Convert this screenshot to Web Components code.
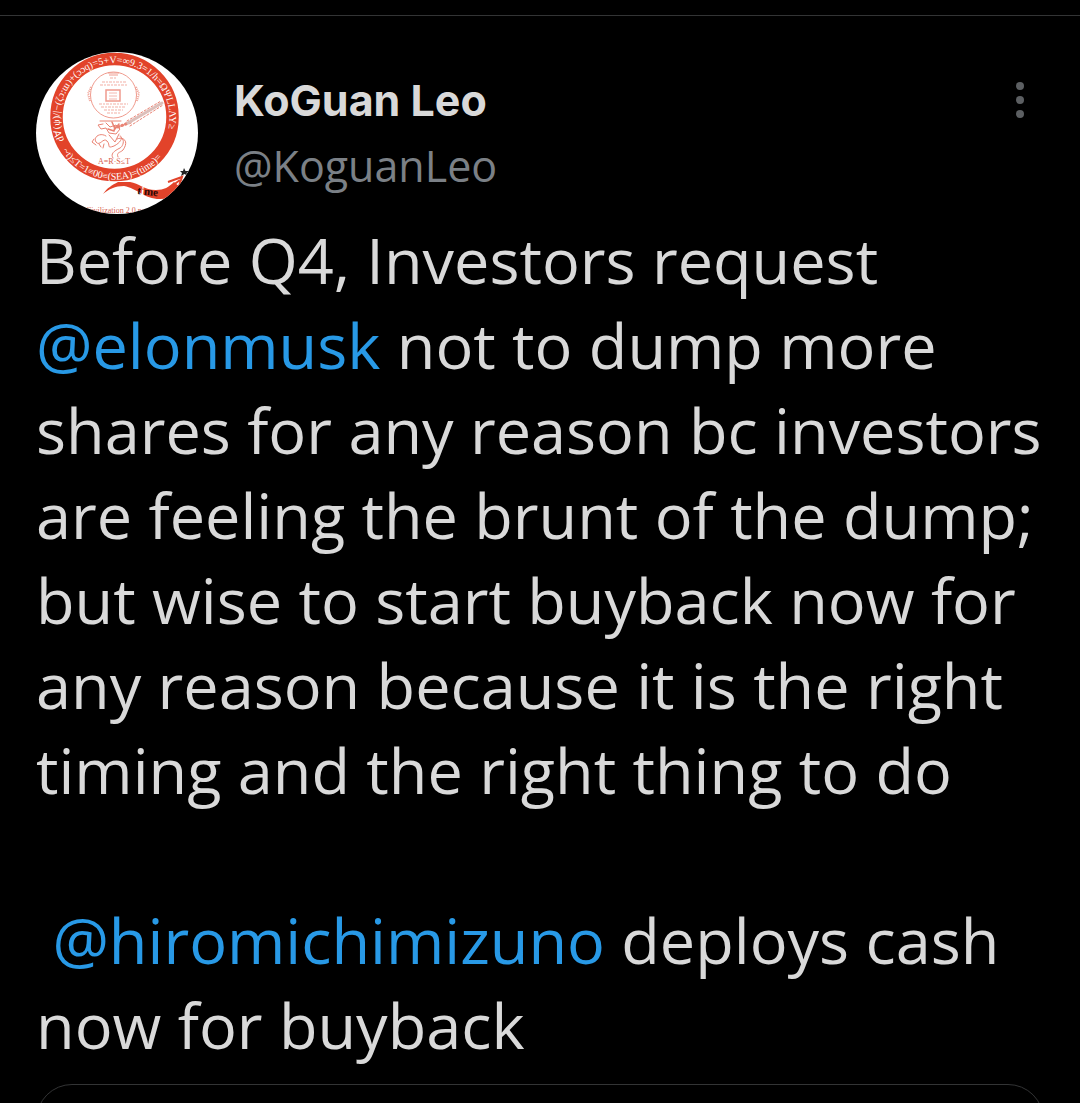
<!DOCTYPE html>
<html lang="en">
<head>
<meta charset="utf-8">
<meta name="viewport" content="width=device-width, initial-scale=1">
<title>KoGuan Leo</title>
<style>
    body {
        margin: 0;
        background: #000;
        color: #d9d9d9;
        font-family: "Open Sans", "Noto Sans", sans-serif;
    }
</style>
</head>
<body>
<tweet-post>
    <user-avatar slot="avatar"></user-avatar>
    <user-name slot="author" handle="KoguanLeo">KoGuan Leo</user-name>
    <more-button slot="menu"></more-button>
    <tweet-text>Before Q4, Investors request
<user-mention handle="elonmusk"></user-mention> not to dump more
shares for any reason bc investors
are feeling the brunt of the dump;
but wise to start buyback now for
any reason because it is the right
timing and the right thing to do

 <user-mention handle="hiromichimizuno"></user-mention> deploys cash
now for buyback</tweet-text>
    <quote-card slot="quote"></quote-card>
</tweet-post>

<script>
class TweetPost extends HTMLElement {
    constructor() {
        super();
        this.attachShadow({ mode: 'open' });
        this.shadowRoot.innerHTML = `
            <style>
                :host {
                    display: block;
                    padding-top: 15px;
                }
                article {
                    border-top: 1px solid #333435;
                    padding: 36px 36px 0;
                }
                header {
                    display: flex;
                    align-items: flex-start;
                    gap: 36px;
                }
                .author {
                    flex: 1;
                    min-width: 0;
                    padding-top: 16px;
                }
                .menu {
                    padding-top: 24px;
                }
            </style>
            <article>
                <header>
                    <slot name="avatar"></slot>
                    <div class="author"><slot name="author"></slot></div>
                    <div class="menu"><slot name="menu"></slot></div>
                </header>
                <slot></slot>
                <slot name="quote"></slot>
            </article>
        `;
    }
}

class UserAvatar extends HTMLElement {
    constructor() {
        super();
        this.attachShadow({ mode: 'open' });
        this.shadowRoot.innerHTML = `
            <style>
                :host {
                    display: block;
                    flex: none;
                    width: 162px;
                    height: 162px;
                    border-radius: 50%;
                    overflow: hidden;
                    background: #fff;
                }
                svg {
                    display: block;
                }
                text {
                    font-family: "Liberation Serif", serif;
                }
            </style>
            <svg viewBox="0 0 162 162" width="162" height="162" aria-hidden="true">
                <defs>
                    <path id="upper" d="M29 90A55 55 0 1 1 128 90"/>
                    <path id="lower" d="M21 88A61.500 61.500 0 0 0 136 88"/>
                </defs>

                <!-- ring -->
                <circle cx="78.500" cy="65" r="58" fill="none" stroke="#e2432a" stroke-width="12.500"/>
                <g fill="#fff" font-size="10">
                    <text><textPath href="#upper" startOffset="2">d∀(ψ)/|−(ζɔ:ɯ)+(ɔɔq)=5+V=∞9.3=1/h=ΩΨLLΛΥ≥</textPath></text>
                    <text><textPath href="#lower" startOffset="12">~t)≤T=1≡00≡(SEA)=(time)=</textPath></text>
                </g>

                <!-- tail -->
                <path d="M67 142C71 136 76 133 82 130L94 130C103 131 108 138 120 138C128 138 133 135 138 130L145 136C141 143 136 147 124 147C108 147 101 136 88 134C79 134 73 137 67 142Z" fill="#e2432a"/>
                <path d="M132 130L146 125L142 137M136 134L144 128" fill="none" stroke="#e2432a" stroke-width="2"/>
                <path d="M148 116L149.500 119L153 119L150.500 121L152 124L148.500 122L145 124L146 121L144 119L147 119Z" fill="#222"/>
                <text x="101" y="142" font-size="11" font-weight="bold" fill="#290804" transform="rotate(6 101 142)">t<tspan fill="#fff">i</tspan>me</text>

                <!-- seal -->
                <g fill="none" stroke="#ef9b8e">
                    <circle cx="77.500" cy="43" r="23" stroke-width="1"/>
                    <path d="M72 21H83M73 23H82" stroke-width="1"/>
                    <path d="M55 35L52 42L54 49M100 35L103 42L101 49" stroke-width="2" stroke-dasharray="1 1"/>
                    <rect x="70" y="38" width="14" height="11" stroke-width="1.500"/>
                    <path d="M73 41H81M73 44H81M73 47H81" stroke-width="1" opacity=".7"/>
                    <path d="M74 26H81M66 30H90M64 33H91M63 52H92M65 55H90M68 58H87M71 61H84" stroke-width="1" stroke-dasharray="3 1 2 1" opacity=".8"/>
                </g>

                <!-- dragon and staff -->
                <g fill="none" stroke="#e98374" stroke-linecap="round" stroke-linejoin="round">
                    <path d="M82 75L95 70" stroke-width="3" stroke-dasharray="1 3"/>
                    <path d="M92 71L126 51" stroke="#dcbfba" stroke-width="3"/>
                    <path d="M91 69L125 49M94 74L127 53" stroke-width="1" stroke-dasharray="2 2"/>
                    <path d="M64 69H85M67 72L62 73L65 77L70 76L73 81L80 82L84 77L80 73L74 75L70 71" stroke-width="1"/>
                    <path d="M72 77L78 79L79 74M76 70L79 77L83 72" stroke-width="1.500"/>
                    <path d="M70 84C64 80 57 85 60 90C64 95 67 85 71 89C75 93 70 97 78 94C86 90 87 84 84 84" stroke-width="1"/>
                    <path d="M81 87C90 83 88 94 84 96C78 99 74 102 77 106M85 86C93 88 89 95 87 98C84 101 80 100 82 105" stroke-width="1"/>
                    <path d="M58 87L56 90L60 93M63 92L65 95M68 92L67 96M73 83L79 90L83 82" stroke-width="1"/>
                </g>
                <text x="62" y="112" font-size="8" fill="#d8604c">A=R·S≤T</text>
                <text x="50" y="161" font-size="8" fill="#d76250">Civilization 2.0 peace</text>
            </svg>
        `;
    }
}

class UserName extends HTMLElement {
    constructor() {
        super();
        this.attachShadow({ mode: 'open' });
        this.shadowRoot.innerHTML = `
            <style>
                :host {
                    display: flex;
                    flex-direction: column;
                    align-items: flex-start;
                    font-size: 43px;
                    line-height: 65px;
                }
                .name {
                    font-family: Inter, sans-serif;
                    font-weight: 700;
                }
                a {
                    color: #7b8086;
                    text-decoration: none;
                }
            </style>
            <span class="name"><slot></slot></span>
            <a href="#"></a>
        `;
    }

    connectedCallback() {
        this.shadowRoot.querySelector('a').textContent = '@' + this.getAttribute('handle');
    }
}

class MoreButton extends HTMLElement {
    constructor() {
        super();
        this.attachShadow({ mode: 'open' });
        this.shadowRoot.innerHTML = `
            <style>
                :host {
                    display: block;
                }
                button {
                    display: block;
                    padding: 0;
                    border: 0;
                    background: none;
                    color: #5c5f62;
                    cursor: pointer;
                }
                svg {
                    display: block;
                }
            </style>
            <button type="button" aria-label="More options">
                <svg width="48" height="48" viewBox="0 0 48 48" fill="currentColor" aria-hidden="true">
                    <circle cx="24" cy="10" r="4"/>
                    <circle cx="24" cy="24" r="4"/>
                    <circle cx="24" cy="38" r="4"/>
                </svg>
            </button>
        `;
    }
}

class TweetText extends HTMLElement {
    constructor() {
        super();
        this.attachShadow({ mode: 'open' });
        this.shadowRoot.innerHTML = `
            <style>
                :host {
                    display: block;
                    padding-top: 3px;
                    font-size: 63px;
                    line-height: 85px;
                }
                p {
                    margin: 0;
                    white-space: pre-wrap;
                }
            </style>
            <p><slot></slot></p>
        `;
    }
}

class UserMention extends HTMLElement {
    constructor() {
        super();
        this.attachShadow({ mode: 'open' });
        this.shadowRoot.innerHTML = `
            <style>
                :host {
                    display: inline;
                    white-space: normal;
                }
                a {
                    color: #2899e6;
                    text-decoration: none;
                }
            </style><a href="#"></a>`;
    }

    connectedCallback() {
        this.shadowRoot.querySelector('a').textContent = '@' + this.getAttribute('handle');
    }
}

// Only the top edge of the quoted post is shown
class QuoteCard extends HTMLElement {
    constructor() {
        super();
        this.attachShadow({ mode: 'open' });
        this.shadowRoot.innerHTML = `
            <style>
                :host {
                    display: block;
                    overflow: hidden;
                    height: 19px;
                    margin-top: 17px;
                }
                div {
                    box-sizing: border-box;
                    height: 80px;
                    border: 1px solid #333435;
                    border-radius: 36px;
                }
            </style>
            <div><slot></slot></div>
        `;
    }
}

customElements.define('tweet-post', TweetPost);
customElements.define('user-avatar', UserAvatar);
customElements.define('user-name', UserName);
customElements.define('more-button', MoreButton);
customElements.define('tweet-text', TweetText);
customElements.define('user-mention', UserMention);
customElements.define('quote-card', QuoteCard);
</script>
</body>
</html>
